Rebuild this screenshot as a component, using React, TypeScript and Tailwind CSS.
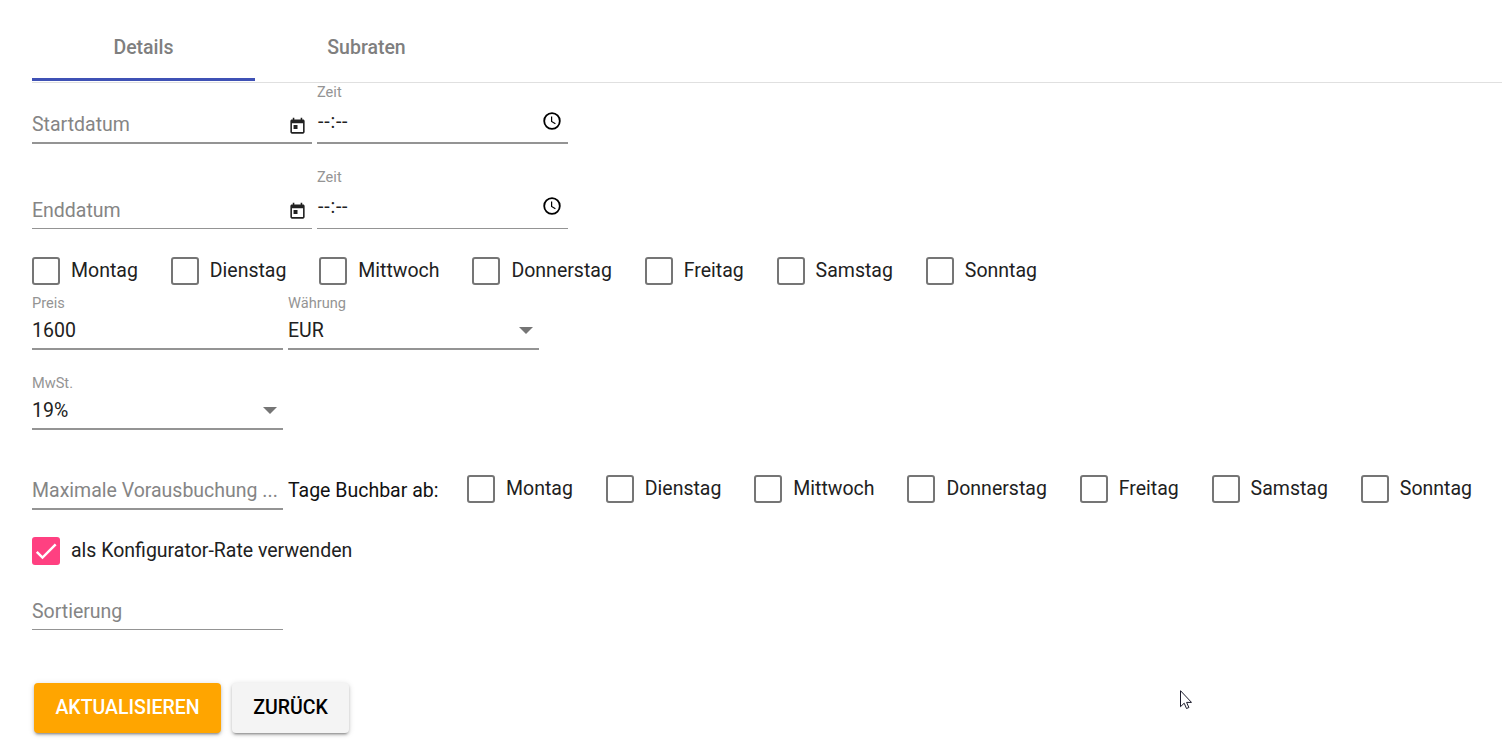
import { clsx } from 'clsx'
import type { ReactNode } from 'react'

const days = ['Montag', 'Dienstag', 'Mittwoch', 'Donnerstag', 'Freitag', 'Samstag', 'Sonntag']

function CalendarIcon() {
  return (
    <svg viewBox="0 0 24 24" className="mt-[4px] mr-[5px] h-[19px] w-[19px] shrink-0 fill-[#212121]">
      <path d="M19 3h-1V1h-2v2H8V1H6v2H5c-1.11 0-1.99.9-1.99 2L3 19c0 1.1.89 2 2 2h14c1.1 0 2-.9 2-2V5c0-1.1-.9-2-2-2zm0 16H5V8h14v11zM7 10h5v5H7z" />
    </svg>
  )
}

function ClockIcon() {
  return (
    <svg viewBox="0 0 18 18" className="h-[18px] w-[18px] shrink-0" fill="none" stroke="#000">
      <circle cx="9" cy="9" r="7.8" strokeWidth="1.8" />
      <path d="M8.6 4.4v5l3.8 2.4" strokeWidth="1.2" />
    </svg>
  )
}

function Arrow() {
  return (
    <svg viewBox="0 0 14 7" className="mr-[6px] h-[7px] w-[14px] shrink-0 fill-[#757575]">
      <path d="M0 0h14L7 7z" />
    </svg>
  )
}

type FieldProps = {
  label?: string
  value?: string
  placeholder?: string
  width?: string
  thin?: boolean
  icon?: ReactNode
}

function Field({ label, value, placeholder, width = 'w-[251px]', thin, icon }: FieldProps) {
  return (
    <div className={clsx('flex flex-col border-[#949494]', width, thin ? 'border-b' : 'border-b-2')}>
      {label && <span className="h-[17px] text-[14.6px] leading-[17px] text-[#949494]">{label}</span>}
      <div className={clsx('flex h-[36px] items-center justify-between', thin ? 'pb-px' : '')}>
        <span className={clsx('pt-[2px] whitespace-nowrap', value ? 'text-[#212121]' : 'text-[#858585]')}>
          {value ?? placeholder}
        </span>
        {icon}
      </div>
    </div>
  )
}

function TimeField({ thin }: { thin?: boolean }) {
  return (
    <div className={clsx('flex w-[251px] flex-col border-[#949494]', thin ? 'border-b' : 'border-b-2')}>
      <span className="h-[17px] text-[14.6px] leading-[17px] text-[#949494]">Zeit</span>
      <div
        className={clsx('flex items-center justify-between pr-[7px] pl-px', thin ? 'h-[42px] pb-[2px]' : 'h-[41px] pb-px')}
      >
        <span className="pt-px tracking-[0.8px] text-[#212121]">--:--</span>
        <ClockIcon />
      </div>
    </div>
  )
}

function Checkbox({ label, checked }: { label: string; checked?: boolean }) {
  return (
    <label className="flex h-7 items-center gap-[11px]">
      <span
        className={clsx(
          'flex h-7 w-7 shrink-0 items-center justify-center rounded-[3px]',
          checked ? 'bg-[#ff4081]' : 'border-2 border-[#757575]',
        )}
      >
        {checked && (
          <svg viewBox="0 0 24 24" className="h-7 w-7" fill="none" stroke="#fff" strokeWidth="2.13">
            <path d="M4.1 12.7 9 17.6 20.3 6.3" />
          </svg>
        )}
      </span>
      <span className="whitespace-nowrap text-[#212121]">{label}</span>
    </label>
  )
}

function DayCheckboxes() {
  return (
    <div className="flex gap-[32.9px]">
      {days.map((day) => (
        <Checkbox key={day} label={day} />
      ))}
    </div>
  )
}

export default function App() {
  return (
    <div className="relative h-[752px] overflow-hidden bg-white pt-[15px] pl-8 font-['Roboto',sans-serif] text-[19.5px] leading-6 font-normal">
      {/* Tabs */}
      <div className="flex h-[68px] border-b border-[#e0e0e0] text-[19.5px] font-medium text-[#7f7f7f]">
        <div className="mb-px flex w-[223px] items-center justify-center border-b-3 border-[#3f51b5] pt-[2px]">
          <span>Details</span>
        </div>
        <div className="mb-px flex w-[223px] items-center justify-center border-b-3 border-transparent pt-[2px]">
          <span>Subraten</span>
        </div>
      </div>

      {/* Start and end */}
      <div className="flex h-[61px] items-end gap-[5px]">
        <Field placeholder="Startdatum" width="w-[280px]" icon={<CalendarIcon />} />
        <TimeField />
      </div>
      <div className="flex h-[85px] items-end gap-[5px]">
        <Field placeholder="Enddatum" width="w-[280px]" icon={<CalendarIcon />} thin />
        <TimeField thin />
      </div>

      <div className="mt-7">
        <DayCheckboxes />
      </div>

      {/* Price */}
      <div className="flex h-[65px] items-end gap-[5px]">
        <Field label="Preis" value="1600" />
        <Field label="Währung" value="EUR" icon={<Arrow />} />
      </div>
      <div className="flex h-[80px] items-end">
        <Field label="MwSt." value="19%" icon={<Arrow />} />
      </div>

      {/* Booking window */}
      <div className="flex h-[80px] items-end">
        <Field placeholder="Maximale Vorausbuchung ..." />
        <span className="mb-[7px] ml-[5px] w-[179px] whitespace-nowrap text-[#111]">Tage Buchbar ab:</span>
        <div className="mb-[7px]">
          <DayCheckboxes />
        </div>
      </div>

      <div className="mt-[27px]">
        <Checkbox label="als Konfigurator-Rate verwenden" checked />
      </div>
      <div className="flex h-[65px] items-end">
        <Field placeholder="Sortierung" thin />
      </div>

      {/* Actions */}
      <div className="mt-[53px] ml-[2px] flex gap-[11px] font-medium">
        <button className="h-[50px] w-[187px] rounded bg-[#ffa500] pb-px text-white shadow-[0_3px_2px_-2px_rgba(0,0,0,0.25),0_2px_3px_rgba(0,0,0,0.18),0_1px_6px_rgba(0,0,0,0.14)]">
          AKTUALISIEREN
        </button>
        <button className="h-[50px] w-[117px] rounded bg-[#f4f4f4] pb-px text-black shadow-[0_3px_2px_-2px_rgba(0,0,0,0.25),0_2px_3px_rgba(0,0,0,0.18),0_1px_6px_rgba(0,0,0,0.14)]">
          ZURÜCK
        </button>
      </div>

      {/* Mouse pointer */}
      <svg viewBox="0 0 12 20" className="absolute top-[690px] left-[1180px] h-[20px] w-[12px]">
        <path
          d="M.5.7v16l3.7-3.5 2.3 5.3 2.4-1-2.3-5.1h4.9z"
          fill="#fff"
          stroke="#1a1a2a"
          strokeWidth="1"
        />
      </svg>
    </div>
  )
}
